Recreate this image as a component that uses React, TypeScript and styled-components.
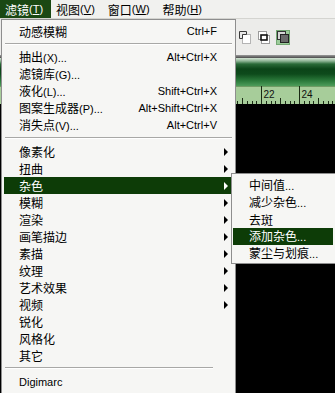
import React from 'react';
import styled, { createGlobalStyle } from 'styled-components';

const CN = `"Noto Sans CJK SC", "Liberation Sans", sans-serif`;
const LAT = `"Liberation Sans", "DejaVu Sans", sans-serif`;

const GlobalStyle = createGlobalStyle`
  html, body {
    margin: 0;
    padding: 0;
    background: #000;
  }
  body {
    font-family: ${CN};
  }
`;

type Item = {
  label: string;
  key?: string;
  dots?: boolean;
  shortcut?: string;
  sub?: boolean;
  active?: boolean;
  latin?: boolean;
};
type Entry = Item | { sep: true; short?: boolean };

const filterMenu: Entry[] = [
  { label: '动感模糊', shortcut: 'Ctrl+F' },
  { sep: true },
  { label: '抽出', key: 'X', dots: true, shortcut: 'Alt+Ctrl+X' },
  { label: '滤镜库', key: 'G', dots: true },
  { label: '液化', key: 'L', dots: true, shortcut: 'Shift+Ctrl+X' },
  { label: '图案生成器', key: 'P', dots: true, shortcut: 'Alt+Shift+Ctrl+X' },
  { label: '消失点', key: 'V', dots: true, shortcut: 'Alt+Ctrl+V' },
  { sep: true },
  { label: '像素化', sub: true },
  { label: '扭曲', sub: true },
  { label: '杂色', sub: true, active: true },
  { label: '模糊', sub: true },
  { label: '渲染', sub: true },
  { label: '画笔描边', sub: true },
  { label: '素描', sub: true },
  { label: '纹理', sub: true },
  { label: '艺术效果', sub: true },
  { label: '视频', sub: true },
  { label: '锐化' },
  { label: '风格化' },
  { label: '其它' },
  { sep: true, short: true },
  { label: 'Digimarc', latin: true },
  { sep: true, short: true },
];

const noiseMenu: Item[] = [
  { label: '中间值', dots: true },
  { label: '减少杂色', dots: true },
  { label: '去斑' },
  { label: '添加杂色', dots: true, active: true },
  { label: '蒙尘与划痕', dots: true },
];

const menuBar = [
  { label: '滤镜', key: 'T', open: true },
  { label: '视图', key: 'V' },
  { label: '窗口', key: 'W' },
  { label: '帮助', key: 'H' },
];

const Screen = styled.div`
  position: relative;
  width: 335px;
  height: 393px;
  overflow: hidden;
  display: flex;
  flex-direction: column;
  background: #000;
`;

const MenuBar = styled.div`
  height: 18px;
  flex: none;
  display: flex;
  align-items: stretch;
  background: #f1f1ef;
  border-bottom: 1px solid #d4d4d0;
`;

const BarItem = styled.div<{ $open?: boolean }>`
  display: flex;
  align-items: center;
  padding: 0 8px 0 5px;
  font-size: 12px;
  color: ${(p) => (p.$open ? '#fff' : '#000')};
  background: ${(p) => (p.$open ? '#1a4813' : 'transparent')};
`;

const Lat = styled.span`
  font-family: ${LAT};
  font-size: 11px;
`;

const Access = styled.span`
  text-decoration: underline;
  text-underline-offset: 1px;
`;

const Workspace = styled.div`
  flex: 1;
  display: flex;
  flex-direction: column;
`;

const OptionsBar = styled.div`
  height: 36px;
  flex: none;
  display: flex;
  align-items: center;
  gap: 5px;
  padding-left: 238px;
  background: #ececea;
`;

const ToolButton = styled.div<{ $on?: boolean }>`
  width: 14px;
  height: 15px;
  display: flex;
  align-items: center;
  justify-content: center;
  box-sizing: border-box;
  background: ${(p) => (p.$on ? '#9ccb9a' : 'transparent')};
  border: 1px solid ${(p) => (p.$on ? '#74a873' : 'transparent')};
`;

const Divider = styled.div`
  height: 3px;
  flex: none;
  background: linear-gradient(#9a9a9a, #4a4a4a);
`;

const GreenBand = styled.div`
  height: 28px;
  flex: none;
  background: linear-gradient(
    to bottom,
    #d2e2d2 0px,
    #8fb596 3px,
    #2a6a38 6px,
    #0b4418 11px,
    #0d4a1b 16px,
    #2c7c3c 23px,
    #4d9c5a 28px
  );
`;

const RulerSvg = styled.svg`
  display: block;
  flex: none;
`;

const Canvas = styled.div`
  flex: 1;
  background: #000;
`;

const Dropdown = styled.div`
  position: absolute;
  top: 19px;
  left: 1px;
  width: 235px;
  box-sizing: border-box;
  padding: 3px 2px 0;
  background: #f6f6f4;
  border: 1px solid #8e8e8e;
  border-bottom: none;
  z-index: 1;
`;

const Row = styled.div<{ $active?: boolean }>`
  position: relative;
  height: 17px;
  display: flex;
  align-items: center;
  padding: 0 4px 0 15px;
  font-size: 12px;
  line-height: 17px;
  white-space: nowrap;
  color: ${(p) => (p.$active ? '#fff' : '#000')};
  background: ${(p) => (p.$active ? '#0d3c07' : 'transparent')};
`;

const Label = styled.span`
  flex: 1;
`;

const Shortcut = styled.span`
  font-family: ${LAT};
  font-size: 11px;
  margin-right: 12px;
`;

const Arrow = styled.span`
  width: 0;
  height: 0;
  margin-right: 1px;
  border-top: 4px solid transparent;
  border-bottom: 4px solid transparent;
  border-left: 4px solid currentColor;
`;

const Separator = styled.div<{ $short?: boolean }>`
  height: 9px;
  box-sizing: border-box;
  padding-top: 3px;
  margin: 0 ${(p) => (p.$short ? '20px' : '1px')} 0 1px;

  &::before {
    content: '';
    display: block;
    border-top: 1px solid #a8a8a6;
    border-bottom: 1px solid #ffffff;
  }
`;

const Submenu = styled.div`
  position: absolute;
  top: -4px;
  left: calc(100% - 2px);
  width: 104px;
  box-sizing: border-box;
  padding: 3px 1px 1px;
  background: #f6f6f4;
  border: 1px solid #8e8e8e;
  border-right: none;
  z-index: 2;
`;

const SubRow = styled(Row)`
  padding-left: 16px;
  width: 100px;
  box-sizing: border-box;
`;

const Dots = () => <Lat>...</Lat>;

const ItemText: React.FC<{ item: Item }> = ({ item }) => (
  <Label>
    {item.latin ? <Lat>{item.label}</Lat> : item.label}
    {item.key && <Lat>({item.key})</Lat>}
    {item.dots && <Dots />}
  </Label>
);

const SelNewIcon = () => (
  <svg width="12" height="13" viewBox="0 0 12 13">
    <rect x="3.5" y="3.5" width="8" height="9" fill="#fff" stroke="#b4b4b4" />
    <path d="M0.5 7.5V0.5H7.5V3.5H3.5V7.5Z" fill="#e8e8e8" stroke="#3a3a3a" />
  </svg>
);

const SelInterIcon = () => (
  <svg width="12" height="13" viewBox="0 0 12 13">
    <rect x="0.5" y="0.5" width="8" height="8" fill="#fff" stroke="#9a9a9a" />
    <rect x="3.5" y="4.5" width="8" height="8" fill="#fff" stroke="#9a9a9a" />
    <rect x="3" y="4" width="6" height="5" fill="#fff" stroke="#111" strokeWidth="1.6" />
  </svg>
);

const SelSubIcon = () => (
  <svg width="12" height="12" viewBox="0 0 12 12">
    <rect x="0.5" y="0.5" width="8" height="8" fill="#d6d6d6" stroke="#333" />
    <rect x="3.5" y="3.5" width="8" height="8" fill="#6a6a6a" stroke="#222" />
  </svg>
);

// only the part right of the open menu is visible
const Ruler = () => {
  const ticks: React.ReactNode[] = [];
  for (let i = -5; i <= 15; i++) {
    const x = Math.round(261 + i * 4.75) + 0.5;
    const major = i % 8 === 0;
    const mid = !major && i % 4 === 0;
    const h = major ? 18 : mid ? 6 : 3;
    ticks.push(
      <line key={`t${i}`} x1={x} x2={x} y1={18 - h} y2={18} stroke="#1a2a14" strokeWidth="1" />
    );
    if (major) {
      ticks.push(
        <text
          key={`n${i}`}
          x={x + 2}
          y={12}
          fontSize="10"
          fontFamily="Liberation Sans, sans-serif"
          fill="#111"
        >
          {22 + i / 4}
        </text>
      );
    }
  }
  return (
    <RulerSvg width="335" height="18" viewBox="0 0 335 18">
      <rect width="335" height="18" fill="#a7cd9a" />
      <line x1="0" x2="335" y1="0.5" y2="0.5" stroke="#6f9c64" />
      {ticks}
    </RulerSvg>
  );
};

const App: React.FC = () => (
  <Screen>
    <GlobalStyle />
    <MenuBar>
      {menuBar.map((m) => (
        <BarItem key={m.label} $open={m.open}>
          {m.label}
          <Lat>
            (<Access>{m.key}</Access>)
          </Lat>
        </BarItem>
      ))}
    </MenuBar>

    <Workspace>
      <OptionsBar>
        <ToolButton>
          <SelNewIcon />
        </ToolButton>
        <ToolButton>
          <SelInterIcon />
        </ToolButton>
        <ToolButton $on>
          <SelSubIcon />
        </ToolButton>
      </OptionsBar>
      <Divider />
      <GreenBand />
      <Ruler />
      <Canvas />
    </Workspace>

    <Dropdown>
      {filterMenu.map((e, i) =>
        'sep' in e ? (
          <Separator key={i} $short={e.short} />
        ) : (
          <Row key={i} $active={e.active}>
            <ItemText item={e} />
            {e.shortcut && <Shortcut>{e.shortcut}</Shortcut>}
            {e.sub && <Arrow />}
            {e.active && (
              <Submenu>
                {noiseMenu.map((s) => (
                  <SubRow key={s.label} $active={s.active}>
                    <ItemText item={s} />
                  </SubRow>
                ))}
              </Submenu>
            )}
          </Row>
        )
      )}
    </Dropdown>
  </Screen>
);

export default App;
